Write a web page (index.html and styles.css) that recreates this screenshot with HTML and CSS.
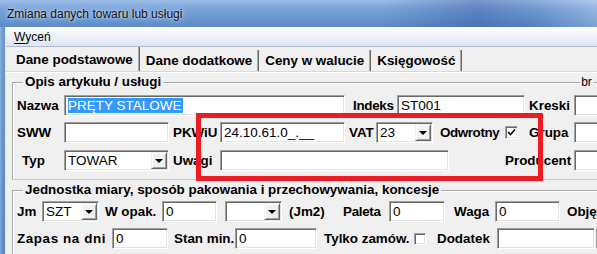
FILE: index.html
```html
<!DOCTYPE html>
<html>
<head>
<meta charset="utf-8">
<title>Zmiana danych towaru lub usługi</title>
<link rel="stylesheet" href="styles.css">
</head>
<body>
<div class="window">
  <div class="titlebar"><span class="title">Zmiana danych towaru lub usługi</span></div>
  <div class="client">
    <div class="menubar"><span class="menu"><u>W</u>yceń</span></div>
    <div class="tabs">
      <div class="tab active">Dane podstawowe</div>
      <div class="tab">Dane dodatkowe</div>
      <div class="tab">Ceny w walucie</div>
      <div class="tab">Księgowość</div>
    </div>
    <div class="panel">
      <div class="group g1">
        <div class="ghead"><span class="gtitle">Opis artykułu / usługi</span><span class="gtitle2">br</span></div>
        <div class="row">
          <span class="lbl a1">Nazwa</span>
          <span class="field w-nazwa"><span class="sel">PRĘTY STALOWE</span></span>
          <span class="lbl a2">Indeks</span>
          <span class="field w-indeks">ST001</span>
          <span class="lbl a3">Kreski</span>
          <span class="field w-right"></span>
        </div>
        <div class="row">
          <span class="lbl b1">SWW</span>
          <span class="field w-sww"></span>
          <span class="lbl b2">PKWiU</span>
          <span class="field w-pkwiu">24.10.61.0_.__</span>
          <span class="lbl b3">VAT</span>
          <span class="field combo w-vat">23<span class="ddbtn"><i class="arrow"></i></span></span>
          <span class="lbl b4">Odwrotny</span>
          <span class="check on"><svg width="9" height="9" viewBox="0 0 9 9"><path d="M1 4 L3.5 6.5 L8 1.5" fill="none" stroke="#000" stroke-width="1.6"/></svg></span>
          <span class="lbl b5">Grupa</span>
          <span class="field w-right"></span>
        </div>
        <div class="row">
          <span class="lbl c1">Typ</span>
          <span class="field combo w-typ">TOWAR<span class="ddbtn"><i class="arrow"></i></span></span>
          <span class="lbl c2">Uwagi</span>
          <span class="field w-uwagi"></span>
          <span class="lbl c3">Producent</span>
          <span class="field w-right"></span>
        </div>
      </div>
      <div class="group g2">
        <div class="ghead"><span class="gtitle">Jednostka miary, sposób pakowania i przechowywania, koncesje</span></div>
        <div class="row">
          <span class="lbl d1">Jm</span>
          <span class="field combo w-jm">SZT<span class="ddbtn"><i class="arrow"></i></span></span>
          <span class="lbl d2">W opak.</span>
          <span class="field w-opak">0</span>
          <span class="field combo w-jm2"><span class="ddbtn"><i class="arrow"></i></span></span>
          <span class="lbl d3">(Jm2)</span>
          <span class="lbl d4">Paleta</span>
          <span class="field w-paleta">0</span>
          <span class="lbl d5">Waga</span>
          <span class="field w-waga">0</span>
          <span class="lbl d6">Objęt</span>
        </div>
        <div class="row">
          <span class="lbl e1">Zapas na dni</span>
          <span class="field w-zapas">0</span>
          <span class="lbl e2">Stan min.</span>
          <span class="field w-stan">0</span>
          <span class="lbl e3">Tylko zamów.</span>
          <span class="check small"></span>
          <span class="lbl e4">Dodatek</span>
          <span class="field w-dodatek"></span>
          <span class="field w-edge"></span>
        </div>
      </div>
    </div>
  </div>
  <div class="highlight"></div>
</div>
</body>
</html>
```

FILE: styles.css
```css
* { box-sizing: border-box; }
html, body { margin: 0; padding: 0; }
body {
  width: 597px;
  height: 254px;
  overflow: hidden;
  background: #5b8bc8;
  font-family: "Liberation Sans", Arial, sans-serif;
}
.window {
  position: relative;
  width: 597px;
  height: 254px;
  overflow: hidden;
  background:
    linear-gradient(90deg, rgba(255,255,255,0.25) 0, rgba(255,255,255,0) 3px),
    linear-gradient(180deg, #6f9ad2 0, #5a88c6 100%);
}
.titlebar {
  height: 27px;
  display: flex;
  align-items: center;
  padding-left: 7px;
  padding-top: 1px;
  background:
    linear-gradient(90deg, rgba(255,255,255,0) 0, rgba(255,255,255,0) 64%, rgba(20,50,130,0.28) 80%, rgba(20,50,130,0.1) 90%, rgba(255,255,255,0.2) 100%),
    linear-gradient(180deg, #9bbde6 0, #7aa2d8 35%, #5b8bc9 100%);
}
.title {
  font-family: "Liberation Sans", Arial, sans-serif;
  font-size: 12px;
  color: #111;
  text-shadow: 0 0 6px rgba(255,255,255,0.7), 0 0 3px rgba(255,255,255,0.6);
}
.client {
  margin-left: 5px;
  height: 227px;
  background: #f0f0f0;
  border-left: 1px solid #e8eef8;
  overflow: hidden;
}
.menubar {
  height: 20px;
  display: flex;
  align-items: center;
  padding-left: 8px;
  background: linear-gradient(180deg, #ffffff 0, #f3f5fb 30%, #dfe4f2 100%);
  border-top: 1px solid #fff;
  border-bottom: 1px solid #b5bccd;
}
.menu {
  font-family: "Liberation Sans", Arial, sans-serif;
  font-size: 12px;
  color: #000;
}
.menu u { text-decoration-thickness: 1px; text-underline-offset: 2px; }
.tabs {
  height: 25px;
  display: flex;
  align-items: flex-end;
  padding-left: 3px;
  border-bottom: 1px solid #d8d8d8;
}
.tab {
  height: 21px;
  padding: 3px 6px 0 6px;
  font-size: 13.4px;
  font-weight: bold;
  color: #000;
  border-right: 1px solid #6a6a6a;
  box-shadow: inset -1px 0 0 #a8a8a8;
  white-space: nowrap;
}
.tab.active {
  height: 24px;
  padding-top: 5px;
  padding-left: 7px;
  background: #f0f0f0;
}
.panel {
  padding: 10px 0 0 6px;
  box-shadow: inset 0 1px 0 #fff;
}
.group {
  border-top: 1px solid #a9a9a9;
  border-left: 1px solid #a9a9a9;
  border-bottom: 1px solid #c9c9c9;
  box-shadow: inset 1px 1px 0 #fff;
  width: 700px;
  padding-left: 2px;
}
.ghead {
  height: 0;
  display: flex;
  align-items: flex-start;
}
.gtitle {
  display: block;
  flex: none;
  margin: -9px 0 0 8px;
  height: 16px;
  line-height: 16px;
  padding: 0 2px;
  background: #f0f0f0;
  font-size: 13.4px;
  font-weight: bold;
  color: #000;
  white-space: nowrap;
}
.gtitle2 {
  display: block;
  flex: none;
  margin: -7px 0 0 417px;
  height: 13px;
  line-height: 13px;
  padding: 0 1px;
  background: #f0f0f0;
  font-size: 12px;
  color: #000;
}
.g1 { padding-bottom: 8px; }
.g1 .ghead + .row { margin-top: 12px; }
.g1 .row + .row { margin-top: 6px; }
.g1 .row:last-child { margin-top: 7px; }
.g2 { margin-top: 10px; border-bottom: 0; height: 80px; }
.g2 .ghead + .row { margin-top: 10px; }
.g2 .row + .row { margin-top: 6px; }
.row {
  display: flex;
  align-items: center;
  height: 21px;
}
.lbl {
  display: block;
  flex: none;
  font-size: 13.4px;
  font-weight: bold;
  color: #000;
  white-space: nowrap;
  overflow: hidden;
}
.field {
  flex: none;
  position: relative;
  display: block;
  height: 21px;
  background: #fff;
  border-top: 1px solid #a0a0a0;
  border-left: 1px solid #a0a0a0;
  border-bottom: 1px solid #fff;
  border-right: 1px solid #fff;
  box-shadow: inset 1px 1px 0 #696969, inset -1px -1px 0 #e3e3e3;
  font-size: 13.5px;
  line-height: 19px;
  padding-left: 3px;
  color: #000;
  white-space: nowrap;
}
.sel {
  display: inline-block;
  background: #3399ff;
  color: #fff;
  line-height: 15px;
  padding-right: 1px;
}
.combo { padding-right: 18px; }
.ddbtn {
  position: absolute;
  right: 1px;
  top: 1px;
  bottom: 1px;
  width: 16px;
  background: #f0f0f0;
  border-top: 1px solid #f0f0f0;
  border-left: 1px solid #f0f0f0;
  border-right: 1px solid #696969;
  border-bottom: 1px solid #696969;
  box-shadow: inset 1px 1px 0 #fff, inset -1px -1px 0 #a0a0a0;
  display: flex;
  align-items: center;
  justify-content: center;
}
.arrow {
  width: 0;
  height: 0;
  border-left: 4px solid transparent;
  border-right: 4px solid transparent;
  border-top: 4px solid #000;
  margin-top: 1px;
}
.check {
  flex: none;
  display: flex;
  align-items: center;
  justify-content: center;
  width: 13px;
  height: 13px;
  background: #fff;
  border-top: 1px solid #a0a0a0;
  border-left: 1px solid #a0a0a0;
  border-bottom: 1px solid #fff;
  border-right: 1px solid #fff;
  box-shadow: inset 1px 1px 0 #696969, inset -1px -1px 0 #e3e3e3;
}
.check.small { width: 12px; height: 12px; }

/* row 1 */
.a1 { width: 49px; padding-left: 2px; }
.w-nazwa { width: 281px; }
.a2 { width: 52px; padding-left: 8px; letter-spacing: -0.3px; }
.w-indeks { width: 128px; }
.a3 { width: 49px; padding-left: 4px; }
.w-right { width: 60px; }
/* row 2 */
.b1 { width: 49px; padding-left: 2px; }
.w-sww { width: 105px; }
.b2 { width: 51px; padding-left: 4px; }
.w-pkwiu { width: 125px; }
.b3 { width: 31px; padding-left: 4px; }
.w-vat { width: 57px; }
.b4 { width: 72px; padding-left: 7px; letter-spacing: -0.4px; }
.b5 { width: 56px; padding-left: 11px; }
/* row 3 */
.c1 { width: 49px; padding-left: 7px; }
.w-typ { width: 105px; }
.c2 { width: 51px; padding-left: 4px; }
.w-uwagi { width: 229px; }
.c3 { width: 125px; padding-left: 56px; }
/* row 4 */
.d1 { width: 27px; padding-left: 2px; }
.w-jm { width: 57px; }
.d2 { width: 63px; padding-left: 6px; }
.w-opak { width: 55px; margin-right: 8px; }
.w-jm2 { width: 57px; }
.d3 { width: 61px; padding-left: 7px; }
.d4 { width: 46px; letter-spacing: -0.3px; }
.w-paleta { width: 56px; }
.d5 { width: 50px; padding-left: 9px; }
.w-waga { width: 65px; }
.d6 { width: 40px; padding-left: 7px; }
/* row 5 */
.e1 { width: 97px; padding-left: 2px; letter-spacing: 0.6px; }
.w-zapas { width: 56px; }
.e2 { width: 67px; padding-left: 6px; }
.w-stan { width: 82px; }
.e3 { width: 97px; padding-left: 7px; }
.e4 { width: 71px; padding-left: 11px; }
.w-dodatek { width: 98px; }
.w-edge { width: 20px; margin-left: 1px; background: #f0f0f0; }

.highlight {
  position: absolute;
  left: 196px;
  top: 113px;
  width: 347px;
  height: 68px;
  border: 5px solid #ed1c24;
}
```
